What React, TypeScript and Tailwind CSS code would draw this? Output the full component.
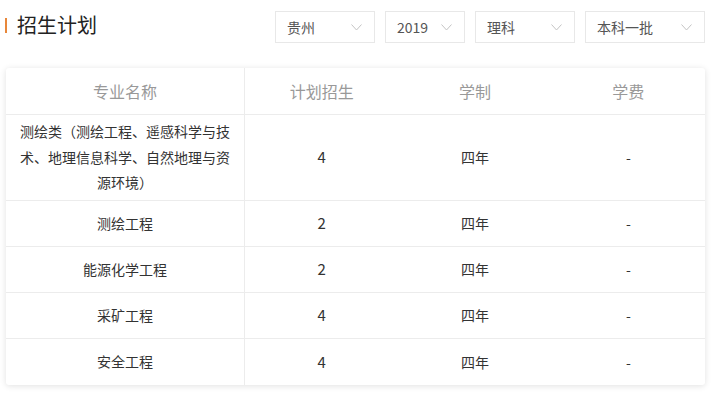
import React from 'react';

const filters = [
  { label: '贵州', width: 'w-[100px]' },
  { label: '2019', width: 'w-[80px]' },
  { label: '理科', width: 'w-[100px]' },
  { label: '本科一批', width: 'w-[120px]' },
];

const rows = [
  { name: '测绘类（测绘工程、遥感科学与技术、地理信息科学、自然地理与资源环境）', plan: '4', years: '四年', fee: '-', tall: true },
  { name: '测绘工程', plan: '2', years: '四年', fee: '-' },
  { name: '能源化学工程', plan: '2', years: '四年', fee: '-' },
  { name: '采矿工程', plan: '4', years: '四年', fee: '-' },
  { name: '安全工程', plan: '4', years: '四年', fee: '-' },
];

const Chevron: React.FC = () => (
  <svg width="11" height="7" viewBox="0 0 11 7" fill="none" className="shrink-0">
    <path d="M0.5 0.5 L5.5 6 L10.5 0.5" stroke="#c4c4c4" strokeWidth="1" />
  </svg>
);

const App: React.FC = () => {
  return (
    <div
      className="w-[711px] h-[393px] bg-white pl-[5px] pr-[6px] pt-[11px] overflow-hidden"
      style={{ fontFamily: '"Noto Sans CJK SC", "Noto Sans", sans-serif' }}
    >
      {/* Header */}
      <div className="flex items-start justify-between">
        <div className="flex items-center h-[26px] mt-[1px]">
          <div className="w-[2px] h-[15px] bg-[#e8873a]" />
          <h1 className="ml-[10px] text-[20px] leading-[26px] text-[#222]">招生计划</h1>
        </div>
        <div className="flex gap-[10px]">
          {filters.map((f) => (
            <div
              key={f.label}
              className={`${f.width} h-[32px] border border-[#e8e8e8] flex items-center justify-between pl-[11px] pr-[12px] text-[14px] text-[#555]`}
            >
              <span>{f.label}</span>
              <Chevron />
            </div>
          ))}
        </div>
      </div>

      {/* Table */}
      <div className="mt-[25px] ml-[1px] w-[699px] bg-white rounded-[3px] shadow-[0_1px_6px_rgba(0,0,0,0.12)] overflow-hidden">
        <div className="flex h-[47px] border-b border-[#ececec] text-[16px] text-[#999]">
          <div className="w-[239px] border-r border-[#ececec] flex items-center justify-center">专业名称</div>
          <div className="flex-1 flex items-center justify-center">计划招生</div>
          <div className="flex-1 flex items-center justify-center">学制</div>
          <div className="flex-1 flex items-center justify-center">学费</div>
        </div>
        {rows.map((r, i) => (
          <div
            key={r.name}
            className={`flex text-[14px] text-[#333] ${r.tall ? 'h-[86px]' : 'h-[46px]'} ${i < rows.length - 1 ? 'border-b border-[#ececec]' : ''}`}
          >
            <div className="w-[239px] border-r border-[#ececec] flex items-center justify-center px-[14px] text-center leading-[25.5px]">
              {r.name}
            </div>
            <div className="flex-1 flex items-center justify-center text-[15px]">{r.plan}</div>
            <div className="flex-1 flex items-center justify-center">{r.years}</div>
            <div className="flex-1 flex items-center justify-center">{r.fee}</div>
          </div>
        ))}
      </div>
    </div>
  );
};

export default App;
